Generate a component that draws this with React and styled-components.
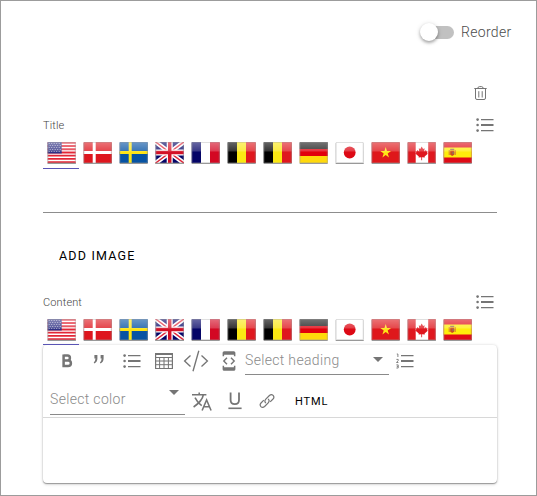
import React from "react";
import styled, { createGlobalStyle } from "styled-components";

const GlobalStyle = createGlobalStyle`
  *, *::before, *::after { box-sizing: border-box; }
  body { margin: 0; background: #fff; font-family: Roboto, sans-serif; }
  svg { display: block; flex: none; }
  button { font-family: inherit; border: 0; padding: 0; background: transparent; }
`;

const Frame = styled.main`
  width: 537px;
  height: 496px;
  border: 1px solid #9c9c9c;
  padding: 0 39px 0 42px;
  background: #fff;
  overflow: hidden;
  color: #757575;
`;

const Header = styled.header`
  display: flex;
  justify-content: flex-end;
  align-items: center;
  height: 62px;
  margin-right: -14px;
`;

const Switch = styled.button`
  display: flex;
  align-items: center;
  width: 32px;
  height: 13px;
  margin-right: 7px;
  border-radius: 7px;
  background: linear-gradient(to right, transparent 8px, #c1c1c1 8px);
`;

const Thumb = styled.span`
  width: 18px;
  height: 18px;
  margin-left: -2px;
  border-radius: 50%;
  background: #fff;
  box-shadow: 0 2px 3px rgba(0, 0, 0, 0.25), 0 1px 5px rgba(0, 0, 0, 0.18);
`;

const SwitchLabel = styled.span`
  width: 50px;
  font-size: 14px;
  font-weight: 300;
  line-height: 20px;
  letter-spacing: 0.32px;
  white-space: nowrap;
  color: #4c4c4c;
`;

const ItemActions = styled.div`
  display: flex;
  justify-content: flex-end;
  padding: 23px 10px 0 0;
  height: 55px;
`;

const FieldHead = styled.div`
  display: flex;
  justify-content: space-between;
  height: 20px;
  padding-right: 3.5px;

  > svg {
    margin-top: -1px;
  }
`;

const FieldLabel = styled.label`
  padding-top: 1px;
  font-size: 11px;
  font-weight: 300;
  line-height: 14px;
  letter-spacing: 0.12px;
  color: #444;
`;

const Tabs = styled.div`
  display: flex;
  height: ${(p) => p.$height}px;
`;

const Tab = styled.button`
  display: flex;
  justify-content: center;
  padding-top: 4px;
  width: 36px;
  height: 100%;
  border-bottom: 1px solid ${(p) => (p.$active ? "#5a55b5" : "transparent")};
`;

const TitleInput = styled.div`
  height: 44px;
  border-bottom: 1px solid #8d8d8d;
`;

const AddButton = styled.button`
  display: block;
  height: 36px;
  margin: 24px 0 22px 16px;
  font-size: 12.5px;
  font-weight: 400;
  letter-spacing: 1.2px;
  color: #000;
`;

const Editor = styled.section`
  height: 138px;
  border-radius: 4px;
  background: #fff;
  box-shadow: 0 1px 1px rgba(0, 0, 0, 0.3), 0 0 3px rgba(0, 0, 0, 0.16), 0 2px 3px rgba(0, 0, 0, 0.1);
`;

const Toolbar = styled.div`
  height: 73px;
  border-bottom: 1px solid #d8d8d8;
`;

const ToolRow = styled.div`
  display: flex;
  align-items: flex-start;
  height: ${(p) => p.$height}px;
  padding-left: ${(p) => p.$indent}px;
`;

const Tool = styled.button`
  display: flex;
  justify-content: center;
  align-items: center;
  flex: none;
  width: ${(p) => p.$width}px;
  height: 32px;
`;

const Select = styled.div`
  display: flex;
  justify-content: space-between;
  width: ${(p) => p.$width}px;
  height: ${(p) => p.$height}px;
  padding: ${(p) => p.$top}px 5px 0 0;
  border-bottom: 1px solid #8a8a8a;
  font-size: 14px;
  font-weight: 300;
  line-height: 20px;
  letter-spacing: 0.33px;
  color: #8a8a8a;
`;

const Caret = styled.span`
  width: 0;
  height: 0;
  margin: ${(p) => p.$drop}px 1px 0 0;
  border: 5px solid transparent;
  border-top-color: #757575;
  border-bottom: 0;
`;

const HtmlButton = styled.button`
  height: 32px;
  margin-left: 13px;
  font-size: 11px;
  font-weight: 400;
  letter-spacing: 0.9px;
  color: #000;
`;

const iconColor = "#757575";

function ListIcon({ numbered }) {
  return (
    <svg width="18" height="16" viewBox="0 0 18 16" fill={iconColor}>
      <path d="M5 2h12.5v1.2H5zM5 7h12.5v2H5zM5 13h12.5v1.2H5z" />
      {numbered ? (
        <path d="M.8 1h1.1v3M.4 6.4h1.8v1.2L.5 9.5h1.9M.4 11.9h1.8V15H.4M.8 13.4h1.4" fill="none" stroke={iconColor} strokeWidth=".9" />
      ) : (
        <>
          <circle cx="1.6" cy="2.6" r="1.3" />
          <circle cx="1.6" cy="8" r="1.3" />
          <circle cx="1.6" cy="13.6" r="1.3" />
        </>
      )}
    </svg>
  );
}

const TrashIcon = () => (
  <svg width="13" height="15" viewBox="0 0 13 15" fill="none" stroke={iconColor} strokeWidth="1">
    <path d="M.3 2.5h12.4M3.8 2.3Q4 .6 5.4.6h2.2Q9 .6 9.2 2.3M1.5 2.8v9.2q0 1.5 1.5 1.5h7q1.5 0 1.5-1.5V2.8" />
    <path d="M4.8 5.2v6.3M8.2 5.2v6.3" />
  </svg>
);

const BoldIcon = () => (
  <svg width="11" height="15" viewBox="0 0 11 15" fill="none" stroke={iconColor} strokeWidth="2.5">
    <path d="M1.6 1.6h3.9q2.4 0 2.4 2.3T5.5 6.6H1.6M1.6 6.6H6q2.9 0 2.9 2.7 0 2.8-2.9 2.8H1.6M1.6.4v12.9" />
  </svg>
);

const QuoteIcon = () => (
  <svg width="12" height="12" viewBox="0 0 12 12" fill={iconColor}>
    <path d="M1.4 0h3v3.5q0 3.5-3 4.9l-.7-.9q1.6-1.2 1.8-3.9H1.4zM7.6 0h3v3.5q0 3.5-3 4.9l-.7-.9q1.6-1.2 1.8-3.9H7.6z" />
  </svg>
);

const TableIcon = () => (
  <svg width="18" height="16" viewBox="0 0 18 16" fill="none" stroke={iconColor}>
    <path d="M.6.5h16.8v15H.6z" strokeWidth="1.2" />
    <path d="M1 1.5h16M1 4.5h16M1 8h16M1 11.7h16M4.6 4.5v11M9 4.5v11M13.4 4.5v11" strokeWidth="1" />
  </svg>
);

const CodeIcon = () => (
  <svg width="26" height="22" viewBox="0 0 26 22" fill="none" stroke={iconColor} strokeWidth="1.35">
    <path d="M7.5 5.5L1.6 11l5.9 5.5M18.5 5.5l5.9 5.5-5.9 5.5M15.8.8L10 21.2" />
  </svg>
);

const DeviceCodeIcon = () => (
  <svg width="14" height="20" viewBox="0 0 14 20" fill={iconColor}>
    <path d="M.6 5.2V1.8Q.6.2 2.2.2h9.6q1.6 0 1.6 1.6v3.4h-1.5V3.7H2.1v1.5zM.6 14.8v3.4q0 1.6 1.6 1.6h9.6q1.6 0 1.6-1.6v-3.4h-1.5v1.5H2.1v-1.5z" />
    <path d="M5 6.8L1.8 10 5 13.2M9 6.8l3.2 3.2L9 13.2" fill="none" stroke={iconColor} strokeWidth="1.4" />
  </svg>
);

const TranslateIcon = () => (
  <svg width="20" height="19" viewBox="0 0 20 19" fill="none" stroke={iconColor} strokeWidth="1.55">
    <path d="M0 2.8h14.4M7.2.4v2.4M3 5.7q2.5 5.1 6.7 7.9M11.3 3q-1.1 6-9.7 12" />
    <path d="M10.1 18.5l4.5-10.6 4.5 10.6M11.6 14.8h6" />
  </svg>
);

const UnderlineIcon = () => (
  <svg width="14" height="18" viewBox="0 0 14 18" fill="none" stroke={iconColor}>
    <path d="M2.6.5v7.6q0 4.1 4.2 4.1T11 8.1V.5" strokeWidth="1.8" />
    <path d="M.4 16.3h13.2" strokeWidth="1.6" />
  </svg>
);

const LinkIcon = () => (
  <svg width="16" height="16" viewBox="0 0 16 16" fill="none" stroke={iconColor} strokeWidth="1.2">
    <path d="M6.9 10.2q-2-2-.1-4l3.6-3.7q2-1.7 3.7-.1 1.6 1.8-.1 3.6l-2.8 2.8" />
    <path d="M9.1 5.8q2 2 .1 4l-3.6 3.7q-2 1.7-3.7.1-1.6-1.8.1-3.6l2.8-2.8" />
  </svg>
);

const FlagSvg = styled.svg`
  filter: drop-shadow(0 1px 0.6px rgba(0, 0, 0, 0.4));
`;

function FlagArt({ code }) {
  if (code === "us") return (
    <>
      <path fill="#fff" d="M0 0h28v21H0z" />
      <path stroke="#e32636" strokeWidth="1.8" d="M0 .8h28M0 4h28M0 7.25h28M0 10.5h28M0 13.7h28M0 16.95h28M0 20.2h28" />
      <path fill="#303184" d="M0 0h14v11.5H0z" />
      <path stroke="#b5b5d2" strokeWidth=".9" strokeDasharray="1 1.5" d="M1 1.5h12M2 3.5h11M1 5.5h12M2 7.5h11M1 9.5h12" />
    </>
  );
  if (code === "dk" || code === "se") {
    const sweden = code === "se";
    return (
      <>
        <path fill={sweden ? "#0753a3" : "#de161e"} d="M0 0h28v21H0z" />
        <path stroke={sweden ? "#ffe515" : "#fff"} strokeWidth="3" d="M0 10.5h28M10.5 0v21" />
      </>
    );
  }
  if (code === "gb") return (
    <>
      <path fill="#050568" d="M0 0h28v21H0z" />
      <path stroke="#fff" strokeWidth="4.6" d="M0 0l28 21M28 0L0 21" />
      <path stroke="#df2438" strokeWidth="1.4" d="M0 0l28 21M28 0L0 21" />
      <path stroke="#fff" strokeWidth="6" d="M14 0v21M0 10.5h28" />
      <path stroke="#d31026" strokeWidth="3.5" d="M14 0v21M0 10.5h28" />
    </>
  );
  if (code === "de") return (
    <>
      <path fill="#181818" d="M0 0h28v7H0z" />
      <path fill="#e1000c" d="M0 7h28v7H0z" />
      <path fill="#ffd90c" d="M0 14h28v7H0z" />
    </>
  );
  if (code === "jp") return (
    <>
      <path fill="#fff" d="M0 0h28v21H0z" />
      <circle cx="14" cy="10.5" r="5.9" fill="#dd0915" />
    </>
  );
  if (code === "vn") return (
    <>
      <path fill="#df171b" d="M0 0h28v21H0z" />
      <path fill="#ffe515" d="M14 5l1.25 4h4.1L16 11.4l1.3 4L14 13l-3.3 2.4 1.3-4L8.65 9h4.1z" />
    </>
  );
  if (code === "ca") return (
    <>
      <path fill="#fff" d="M0 0h28v21H0z" />
      <path fill="#df171f" d="M0 0h8v21H0zM20.5 0H28v21h-7.5zM14 4.5l1.4 2.4 1.5-.7-.4 3.3 1.8-1.4.5 1.2 1.2.1-.6 1.7.7.6-3.2 2.8.2 1.1-2.7-.4v3h-.8v-3l-2.7.4.2-1.1-3.2-2.8.7-.6-.6-1.7 1.2-.1.5-1.2 1.8 1.4-.4-3.3 1.5.7z" />
    </>
  );
  if (code === "es") return (
    <>
      <path fill="#df0b16" d="M0 0h28v21H0z" />
      <path fill="#ffed0b" d="M0 5.5h28v10H0z" />
      <path fill="#d9772b" d="M5 8h1v5H5zM11 8h1v5h-1z" />
      <path fill="#c94d25" d="M6.5 8.5h4v4.2l-2 1.2-2-1.2z" />
      <path fill="#9c6c54" d="M6.5 6.7h4V8h-4zM8.5 10h2v2h-2z" />
    </>
  );
  const [left, middle, right] = code === "fr" ? ["#040467", "#fff", "#d30823"] : ["#000", "#fbe813", "#df171e"];
  return (
    <>
      <path fill={left} d="M0 0h9.3v21H0z" />
      <path fill={middle} d="M9.3 0h9v21h-9z" />
      <path fill={right} d="M18.3 0H28v21h-9.7z" />
    </>
  );
}

function Flag({ code }) {
  const gloss = "gloss-" + React.useId();
  return (
    <FlagSvg width="29" height="21" viewBox="-0.7 0 29 21">
      <defs>
        <linearGradient id={gloss} x2="0" y2="1">
          <stop offset="0" stopColor="#fff" stopOpacity=".4" />
          <stop offset="1" stopColor="#fff" stopOpacity=".2" />
        </linearGradient>
      </defs>
      <FlagArt code={code} />
      <path fill={`url(#${gloss})`} d="M0 0h28v9.5H0z" />
      <path fill="none" stroke="#999" strokeOpacity=".3" d="M.5.5h27v20H.5z" />
    </FlagSvg>
  );
}

const languages = [
  ["us", "English (US)"], ["dk", "Danish"], ["se", "Swedish"], ["gb", "English (UK)"],
  ["fr", "French"], ["be", "Dutch (BE)"], ["be", "French (BE)"], ["de", "German"],
  ["jp", "Japanese"], ["vn", "Vietnamese"], ["ca", "English (CA)"], ["es", "Spanish"],
];

function LanguageField({ label, height }) {
  return (
    <>
      <FieldHead>
        <FieldLabel>{label}</FieldLabel>
        <ListIcon />
      </FieldHead>
      <Tabs $height={height}>
        {languages.map(([code, name], i) => (
          <Tab key={name} aria-label={name} $active={i === 0}>
            <Flag code={code} />
          </Tab>
        ))}
      </Tabs>
    </>
  );
}

export default function App() {
  return (
    <>
      <GlobalStyle />
      <Frame>
        <Header>
          <Switch role="switch" aria-checked="false" aria-label="Reorder"><Thumb /></Switch>
          <SwitchLabel as="span">Reorder</SwitchLabel>
        </Header>
        <ItemActions><TrashIcon /></ItemActions>
        <LanguageField label="Title" height={31} />
        <TitleInput />
        <AddButton>ADD IMAGE</AddButton>
        <LanguageField label="Content" height={30} />
        <Editor>
          <Toolbar>
            <ToolRow $height={40} $indent={9}>
              <Tool $width={31} aria-label="Bold"><BoldIcon /></Tool>
              <Tool $width={32} aria-label="Quote"><QuoteIcon /></Tool>
              <Tool $width={33} aria-label="Bulleted list"><ListIcon /></Tool>
              <Tool $width={31} aria-label="Table"><TableIcon /></Tool>
              <Tool $width={34} aria-label="Code"><CodeIcon /></Tool>
              <Tool $width={32} aria-label="Code block"><DeviceCodeIcon /></Tool>
              <Select $width={144} $height={30} $top={5}>Select heading<Caret $drop={7} /></Select>
              <Tool $width={32} aria-label="Numbered list"><ListIcon numbered /></Tool>
            </ToolRow>
            <ToolRow $height={32} $indent={7}>
              <Select $width={135} $height={30} $top={4}>Select color<Caret $drop={1} /></Select>
              <Tool $width={34} aria-label="Translate"><TranslateIcon /></Tool>
              <Tool $width={32} aria-label="Underline"><UnderlineIcon /></Tool>
              <Tool $width={31} aria-label="Link"><LinkIcon /></Tool>
              <HtmlButton>HTML</HtmlButton>
            </ToolRow>
          </Toolbar>
        </Editor>
      </Frame>
    </>
  );
}
